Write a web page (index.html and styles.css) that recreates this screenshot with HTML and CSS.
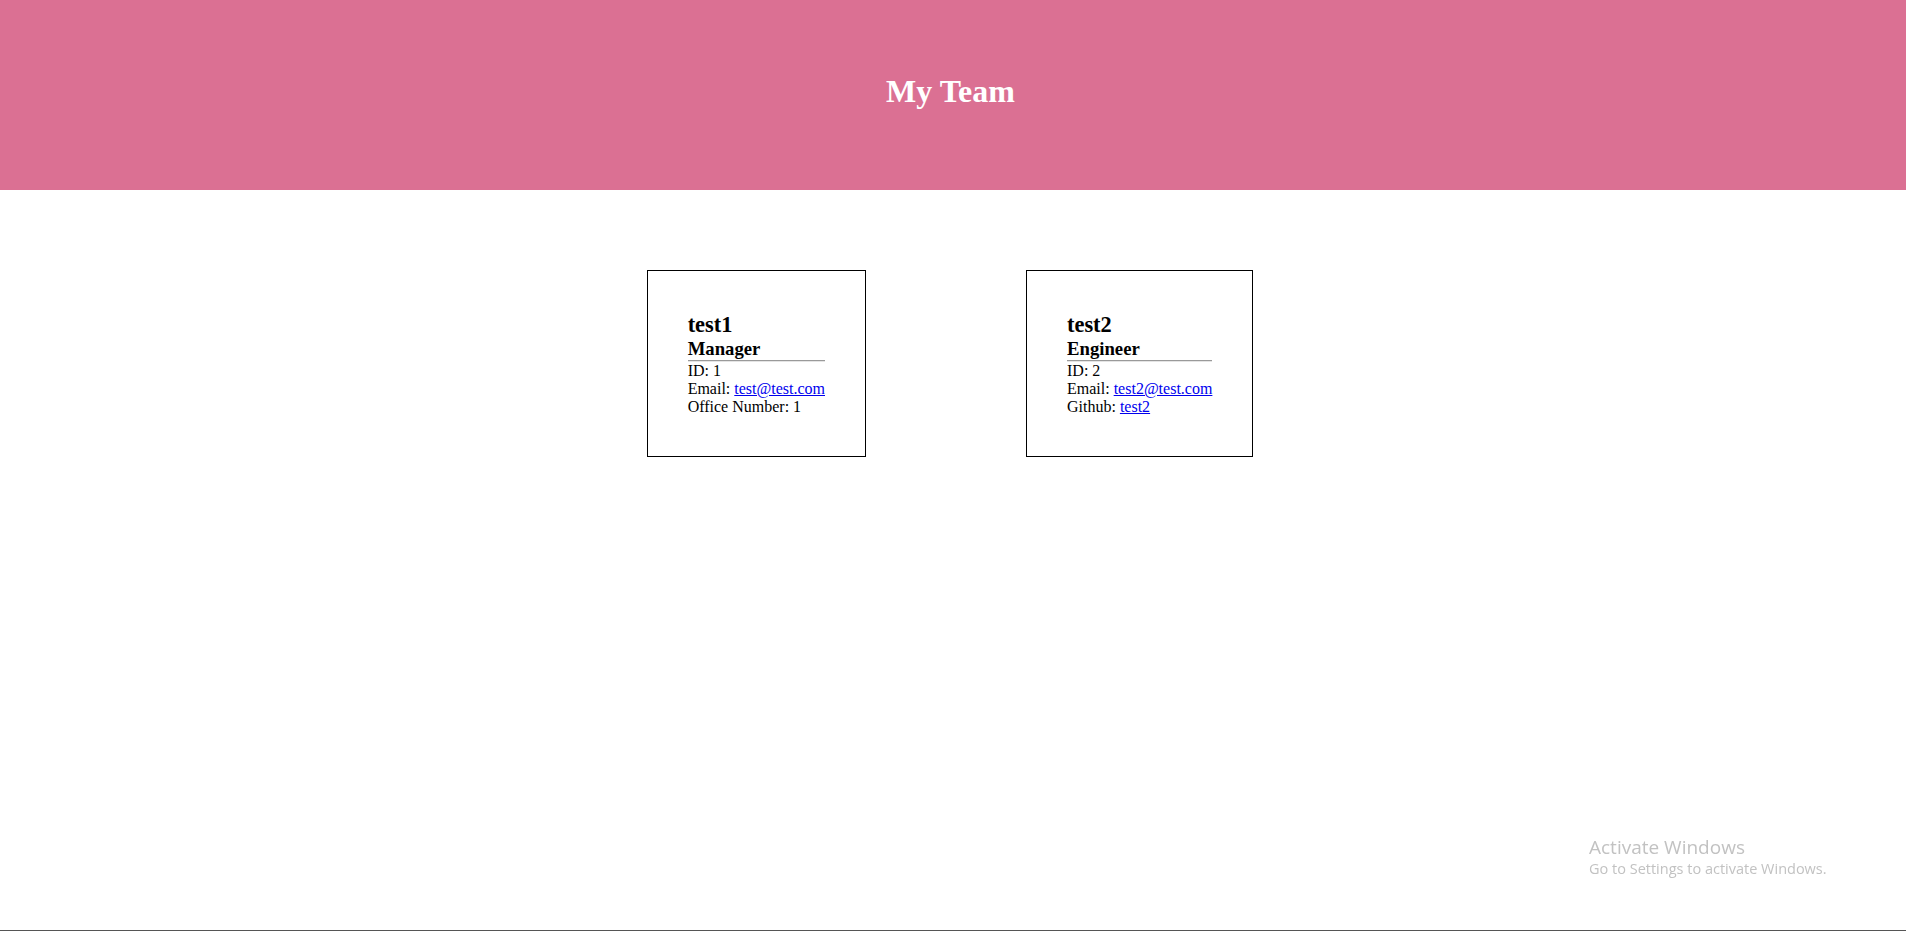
FILE: index.html
```html
<!DOCTYPE html>
<html lang="en">
<head>
<meta charset="utf-8">
<title>My Team</title>
<link rel="stylesheet" href="styles.css">
</head>
<body>
<header class="banner">
  <h1 class="banner-title">My Team</h1>
</header>
<main class="team">
  <div class="card">
    <h2 class="card-name">test1</h2>
    <h3 class="card-role">Manager</h3>
    <hr class="card-rule">
    <div class="card-line">ID: 1</div>
    <div class="card-line">Email: <a href="#">test@test.com</a></div>
    <div class="card-line">Office Number: 1</div>
  </div>
  <div class="card">
    <h2 class="card-name">test2</h2>
    <h3 class="card-role">Engineer</h3>
    <hr class="card-rule">
    <div class="card-line">ID: 2</div>
    <div class="card-line">Email: <a href="#">test2@test.com</a></div>
    <div class="card-line">Github: <a href="#">test2</a></div>
  </div>
</main>
<div class="watermark">
  <div class="watermark-title">Activate Windows</div>
  <div class="watermark-sub">Go to Settings to activate Windows.</div>
</div>
<div class="taskbar-edge"></div>
</body>
</html>
```
FILE: styles.css
```css
html, body {
  margin: 0;
  padding: 0;
}
body {
  font-family: "Liberation Serif", "Times New Roman", serif;
  font-size: 16px;
  color: #000;
  background: #fff;
  height: 931px;
  overflow: hidden;
}
.banner {
  background: palevioletred;
  height: 190px;
  box-sizing: border-box;
  padding-top: 73px;
  padding-right: 5px;
  text-align: center;
}
.banner-title {
  margin: 0;
  font-size: 32px;
  font-weight: bold;
  color: #fff;
}
.team {
  display: flex;
  justify-content: center;
  align-items: flex-start;
  gap: 160px;
  padding-top: 80px;
  padding-right: 6px;
}
.card {
  border: 1px solid #000;
  padding: 41px 40px 40px;
}
.card-name {
  margin: 0;
  font-size: 22.4px;
  font-weight: bold;
}
.card-role {
  margin: 0;
  font-size: 18.72px;
  font-weight: bold;
}
.card-rule {
  margin: 0;
  border: 0;
  border-top: 1px solid #9a9a9a;
  border-bottom: 1px solid #e4e4e4;
}
.card-line a {
  color: #0000ee;
}
.watermark {
  position: fixed;
  left: 1589px;
  top: 835px;
  font-family: "Open Sans", "Noto Sans", sans-serif;
  color: #c2c2c2;
}
.watermark-title {
  font-size: 19px;
  line-height: 24px;
}
.watermark-sub {
  font-size: 14.5px;
  line-height: 20px;
}
.taskbar-edge {
  position: fixed;
  left: 0;
  right: 0;
  bottom: 0;
  height: 1px;
  background: #555;
}
```
